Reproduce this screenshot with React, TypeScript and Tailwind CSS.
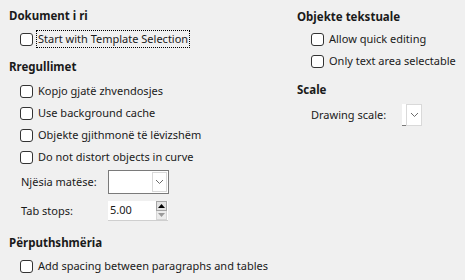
import React from "react";

function Check({ label, focused = false }: { label: string; focused?: boolean }) {
  return (
    <div className="flex h-[22px] items-center">
      <span className="h-[13px] w-[13px] shrink-0 rounded-[3px] border border-[#333333] bg-white" />
      <span
        className={`ml-[4px] whitespace-nowrap px-[1px] leading-[16px] ${
          focused ? "outline-1 outline-dotted outline-black" : ""
        }`}
      >
        {label}
      </span>
    </div>
  );
}

function Heading({ children }: { children: React.ReactNode }) {
  return (
    <div className="flex h-[20px] items-center whitespace-nowrap text-[11.5px] font-bold">
      {children}
    </div>
  );
}

function Chevron() {
  return (
    <svg width="9" height="6" viewBox="0 0 9 6" fill="none">
      <path d="M1 1l3.5 3.5L8 1" stroke="#6b6b6b" strokeWidth="1" />
    </svg>
  );
}

export default function App() {
  return (
    <div
      className="flex h-[280px] w-[465px] bg-[#f0f0f0] text-[11px] text-[#1a1a1a]"
      style={{ fontFamily: '"Noto Sans", "Open Sans", sans-serif' }}
    >
      {/* left column */}
      <div className="flex w-[297px] shrink-0 flex-col pl-[9px] pt-[6px]">
        <Heading>Dokument i ri</Heading>
        <div className="mt-[2px] pl-[11px]">
          <Check label="Start with Template Selection" focused />
        </div>

        <div className="mt-[7px]">
          <Heading>Rregullimet</Heading>
        </div>
        <div className="mt-[3px] flex flex-col pl-[11px]">
          <Check label="Kopjo gjatë zhvendosjes" />
          <Check label="Use background cache" />
          <Check label="Objekte gjithmonë të lëvizshëm" />
          <Check label="Do not distort objects in curve" />

          <div className="mt-[2px] flex h-[24px] items-center">
            <span className="w-[88px] pl-[1px]">Njësia matëse:</span>
            <div className="flex h-[24px] w-[61px] items-stretch border border-[#7a7a7a] bg-white">
              <div className="flex-1" />
              <div className="my-px mr-px flex w-[15px] items-center justify-center border border-[#d9d9d9]">
                <Chevron />
              </div>
            </div>
          </div>

          <div className="mt-[5px] flex h-[24px] items-center">
            <span className="w-[88px] pl-[1px]">Tab stops:</span>
            <div className="flex h-[20px] w-[60px] items-stretch border-b border-[#cfcfcf] bg-white">
              <span className="flex flex-1 items-center pl-[2px]">5.00</span>
              <div className="mr-px flex w-[11px] flex-col">
                <div className="flex h-[10px] items-center justify-center border border-[#a6a6a6] bg-[#e3e3e3]">
                  <svg width="7" height="4" viewBox="0 0 7 4">
                    <path d="M0 4L3.5 0L7 4z" fill="#000" />
                  </svg>
                </div>
                <div className="flex h-[9px] items-center justify-center border border-t-0 border-[#d6d6d6] bg-[#ececec]">
                  <svg width="7" height="4" viewBox="0 0 7 4">
                    <path d="M0 0L7 0L3.5 4z" fill="#9a9a9a" />
                  </svg>
                </div>
              </div>
            </div>
          </div>
        </div>

        <div className="mt-[10px]">
          <Heading>Përputhshmëria</Heading>
        </div>
        <div className="mt-[2px] pl-[11px]">
          <Check label="Add spacing between paragraphs and tables" />
        </div>
      </div>

      {/* right column */}
      <div className="flex flex-1 flex-col pt-[7px]">
        <Heading>Objekte tekstuale</Heading>
        <div className="mt-[1px] flex flex-col pl-[14px]">
          <Check label="Allow quick editing" />
          <Check label="Only text area selectable" />
        </div>

        <div className="mt-[8px]">
          <Heading>Scale</Heading>
        </div>
        <div className="mt-[4px] flex h-[22px] items-center pl-[14px]">
          <span className="w-[91px] whitespace-nowrap">Drawing scale:</span>
          <div className="flex h-[22px] w-[20px] items-stretch">
            <div className="w-[4px] border-b border-[#7a7a7a] bg-white" />
            <div className="flex w-[16px] items-center justify-center border border-[#d9d9d9] bg-white">
              <Chevron />
            </div>
          </div>
        </div>
      </div>
    </div>
  );
}
